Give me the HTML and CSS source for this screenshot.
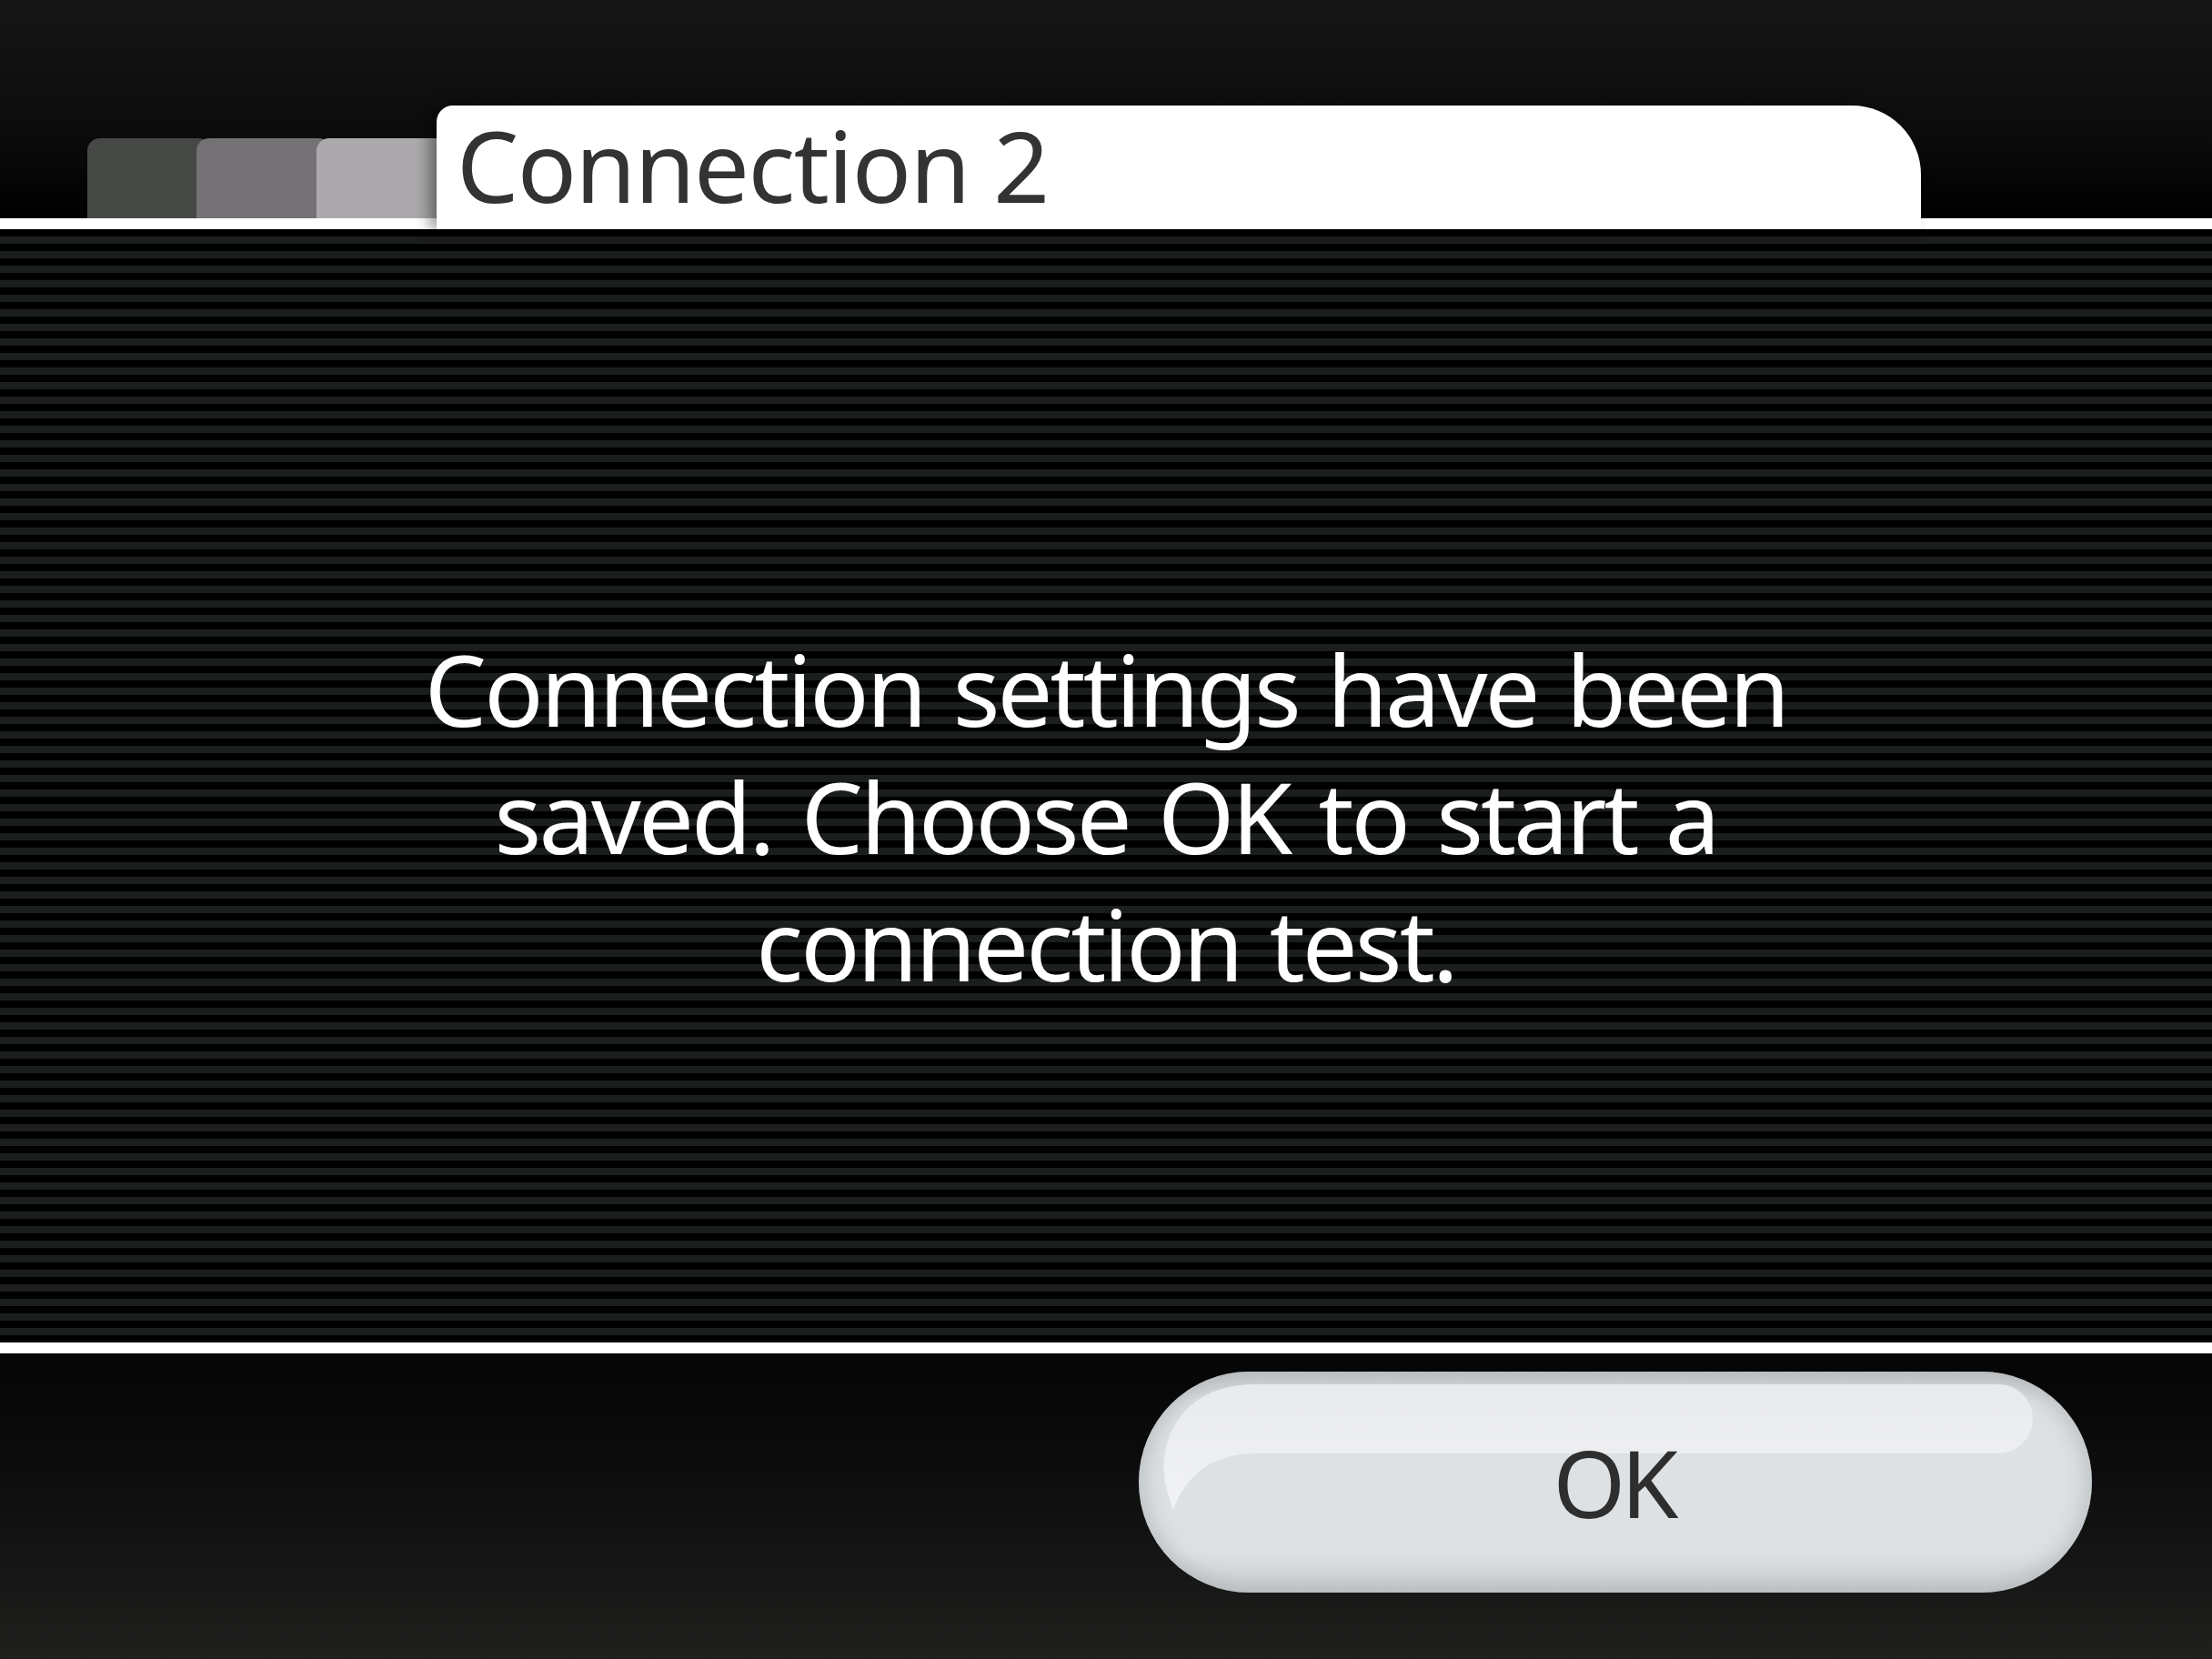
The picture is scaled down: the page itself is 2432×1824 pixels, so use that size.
FILE: index.html
```html
<!DOCTYPE html>
<html lang="en">
<head>
<meta charset="utf-8">
<title>Connection 2</title>
<link rel="stylesheet" href="styles.css">
</head>
<body>
<div class="screen">
  <header class="header">
    <div class="tab tab-1"></div>
    <div class="tab tab-2"></div>
    <div class="tab tab-3"></div>
    <div class="tab-active"><h1 class="title">Connection 2</h1></div>
  </header>
  <div class="rule"></div>
  <main class="message">
    <p class="message-text">Connection settings have been<br>saved. Choose OK to start a<br>connection test.</p>
  </main>
  <div class="rule"></div>
  <footer class="footer">
    <button class="ok-button" type="button">
      <svg class="ok-shine" width="1048" height="243" viewBox="0 0 1048 243" aria-hidden="true">
        <defs>
          <linearGradient id="shine" x1="0" y1="0" x2="0" y2="1">
            <stop offset="0" stop-color="#e8eaec"/>
            <stop offset="1" stop-color="#f1f2f4"/>
          </linearGradient>
        </defs>
        <path d="M38 152 C30 130 26 112 28 96 C34 46 70 14 128 14 L945 14 C966 14 983 31 983 52 C983 73 966 90 945 90 L128 90 C84 90 52 112 38 152 Z" fill="url(#shine)"/>
      </svg>
      <span class="ok-label">OK</span>
    </button>
  </footer>
</div>
</body>
</html>
```

FILE: styles.css
```css
html, body {
  margin: 0;
  padding: 0;
  background: #000;
}

.screen {
  width: 2432px;
  height: 1824px;
  display: flex;
  flex-direction: column;
  font-family: "Noto Sans", "Open Sans", sans-serif;
  overflow: hidden;
}

.header {
  position: relative;
  z-index: 2;
  height: 240px;
  flex: none;
  display: flex;
  align-items: flex-end;
  padding-left: 96px;
  box-sizing: border-box;
  background: linear-gradient(to bottom, #151615 0%, #0c0c0c 60%, #000 100%);
}

.tab {
  height: 88px;
  border-radius: 14px 14px 0 0;
  flex: none;
}

.tab-1 {
  width: 136px;
  background: #464845;
}

.tab-2 {
  width: 148px;
  margin-left: -16px;
  background: #747274;
}

.tab-3 {
  width: 148px;
  margin-left: -16px;
  background: #aba9ab;
}

.tab-active {
  width: 1632px;
  height: 136px;
  margin-left: -16px;
  margin-bottom: -12px;
  flex: none;
  box-sizing: border-box;
  background: #fff;
  border-radius: 18px 76px 0 0;
  padding: 12px 0 0 22px;
  box-shadow: -8px 0 16px rgba(0, 0, 0, 0.4);
  position: relative;
}

.title {
  margin: 0;
  font-size: 108px;
  line-height: 1;
  font-weight: 400;
  color: #333;
  letter-spacing: -1.5px;
}

.rule {
  height: 12px;
  flex: none;
  background: #fff;
}

.message {
  height: 1224px;
  flex: none;
  box-sizing: border-box;
  padding-top: 436px;
  background: repeating-linear-gradient(to bottom, #000 0, #000 8px, #1b1f1c 8px, #1b1f1c 16px);
}

.message-text {
  margin: 0;
  text-align: center;
  color: #fff;
  font-size: 108px;
  line-height: 140px;
  font-weight: 400;
  letter-spacing: -2.9px;
  word-spacing: 6px;
}

.footer {
  flex: 1;
  display: flex;
  justify-content: flex-end;
  align-items: flex-start;
  padding: 20px 132px 0 0;
  background: linear-gradient(to bottom, #050505 0%, #0d0d0d 40%, #1e201d 100%);
}

.ok-button {
  position: relative;
  width: 1048px;
  height: 243px;
  border: none;
  padding: 0;
  margin: 0;
  border-radius: 122px;
  background: linear-gradient(to bottom, #c8cbce 0%, #dde1e4 14%, #dde1e4 82%, #c9cdd0 100%);
  box-shadow: inset 0 0 22px 6px rgba(160, 165, 170, 0.55);
  display: flex;
  align-items: center;
  justify-content: center;
  font-family: "Noto Sans", "Open Sans", sans-serif;
  cursor: pointer;
}

.ok-shine {
  position: absolute;
  left: 0;
  top: 0;
}

.ok-label {
  position: relative;
  font-size: 102px;
  line-height: 1;
  color: #2e2e2e;
  font-weight: 400;
  letter-spacing: -5px;
  margin-right: 4px;
}
```
